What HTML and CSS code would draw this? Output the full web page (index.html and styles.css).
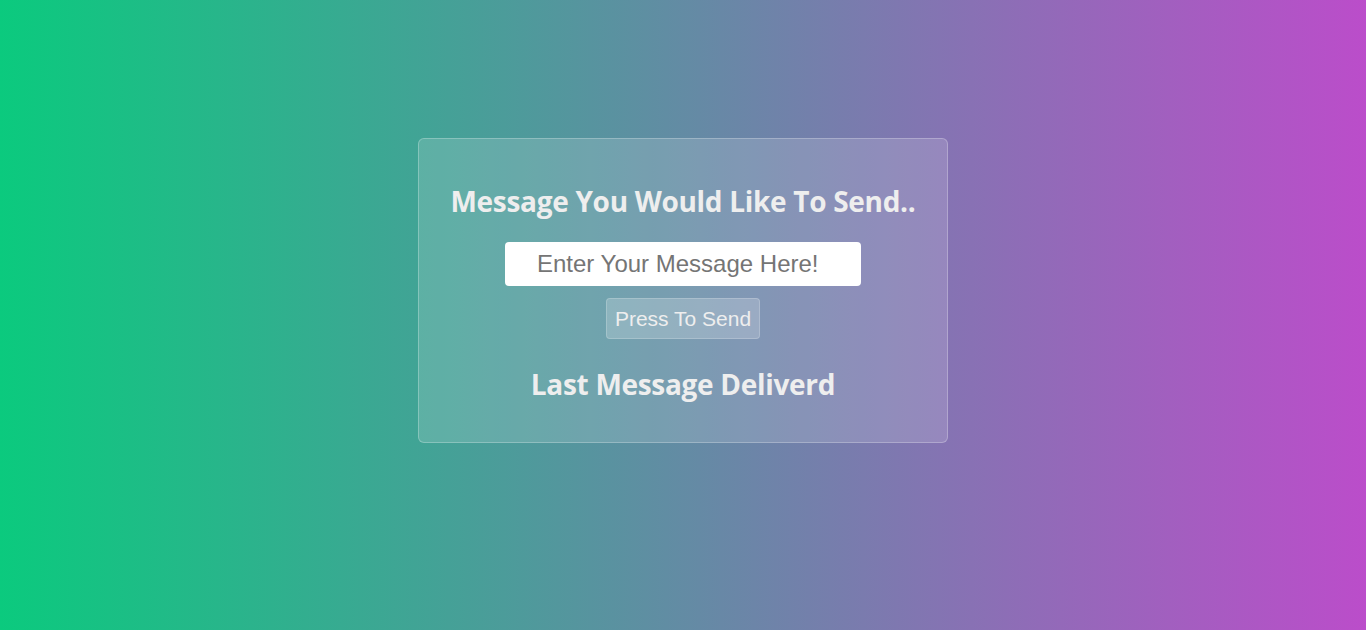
FILE: index.html
```html
<!DOCTYPE html>
<html lang="en">
<head>
<meta charset="utf-8">
<title>Message</title>
<link rel="stylesheet" href="styles.css">
</head>
<body>
<main class="page">
  <section class="card">
    <h2 class="title">Message You Would Like To Send..</h2>
    <input class="msg-input" type="text" placeholder="Enter Your Message Here!">
    <button class="send-btn" type="button">Press To Send</button>
    <h2 class="last">Last Message Deliverd</h2>
  </section>
</main>
</body>
</html>
```
FILE: styles.css
```css
html, body {
  margin: 0;
  height: 100%;
}
body {
  background: linear-gradient(to right, #0bca7e, #bb4dca);
  font-family: "Open Sans", "Noto Sans", sans-serif;
}
.page {
  height: 630px;
  display: flex;
  justify-content: center;
  align-items: flex-start;
  padding-top: 138px;
  box-sizing: border-box;
}
.card {
  width: 530px;
  height: 305px;
  box-sizing: border-box;
  background: rgba(255, 255, 255, 0.15);
  border: 1px solid rgba(255, 255, 255, 0.25);
  border-radius: 6px;
  display: flex;
  flex-direction: column;
  align-items: center;
  padding-top: 42px;
}
.title, .last {
  margin: 0;
  color: #eeeeee;
  font-size: 28px;
  font-weight: 700;
  line-height: 40px;
  letter-spacing: -0.3px;
}
.msg-input {
  margin-top: 21px;
  width: 356px;
  height: 44px;
  box-sizing: border-box;
  border: none;
  border-radius: 4px;
  background: #fff;
  padding: 0 0 0 32px;
  font-family: "Liberation Sans", Arial, sans-serif;
  font-size: 24px;
  color: #333;
  outline: none;
}
.msg-input::placeholder {
  color: #757575;
}
.send-btn {
  margin-top: 12px;
  width: 154px;
  height: 41px;
  box-sizing: border-box;
  background: rgba(255, 255, 255, 0.2);
  border: 1px solid rgba(255, 255, 255, 0.2);
  border-radius: 4px;
  color: #eeeeee;
  font-family: "Liberation Sans", Arial, sans-serif;
  font-size: 21px;
  padding: 0;
}
.last {
  margin-top: 25px;
}
```
